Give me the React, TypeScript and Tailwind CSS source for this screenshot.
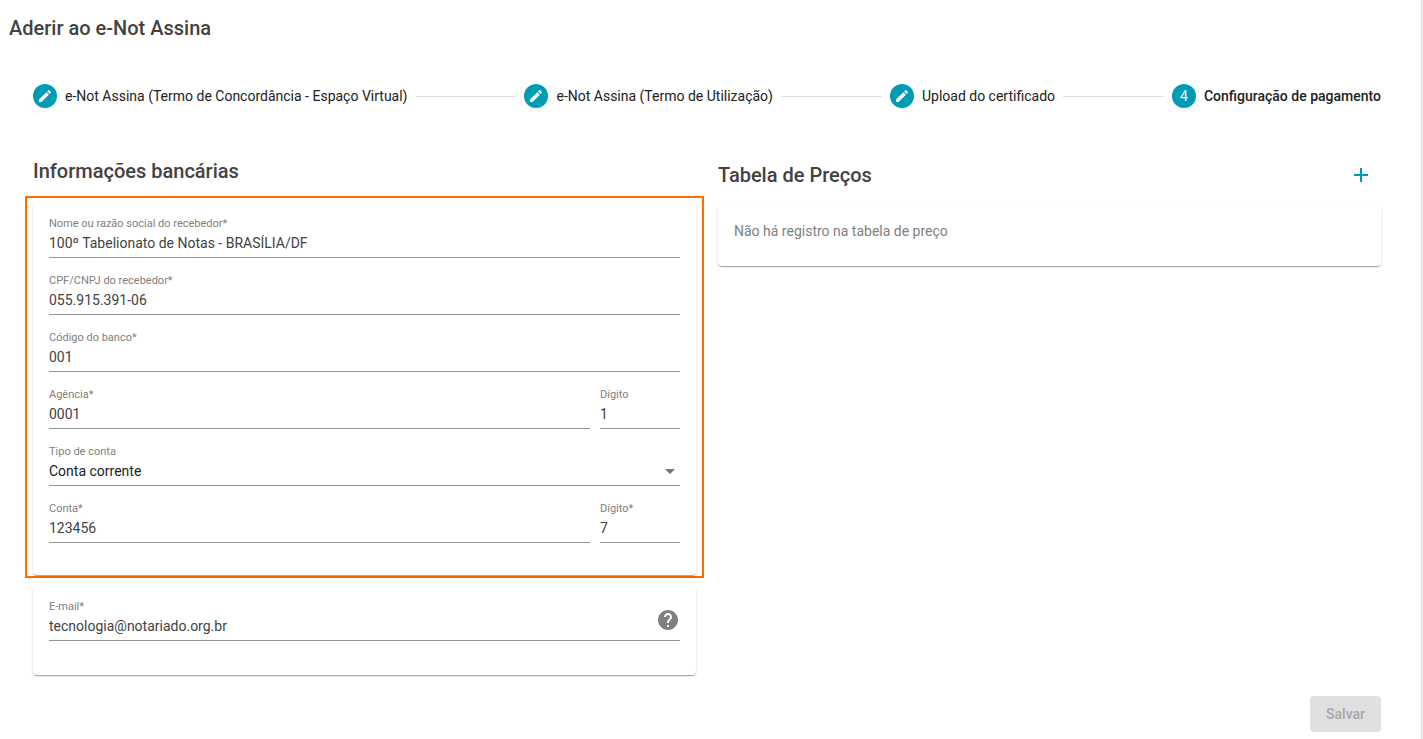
import { Fragment } from "react";
import { MdAdd, MdArrowDropDown, MdCreate, MdHelp } from "react-icons/md";

interface FieldProps {
  id: string;
  label: string;
  value: string;
  type?: string;
  className?: string;
}

const steps = [
  "e-Not Assina (Termo de Concordância - Espaço Virtual)",
  "e-Not Assina (Termo de Utilização)",
  "Upload do certificado",
  "Configuração de pagamento",
];

const cardStyle =
  "rounded bg-white shadow-[0_2px_1px_-1px_rgba(0,0,0,0.2),0_1px_1px_0_rgba(0,0,0,0.14),0_1px_3px_0_rgba(0,0,0,0.12)]";
const labelStyle = "text-[11px] leading-[14px] text-[#808080]";
const controlStyle =
  "h-[27px] w-full rounded-none border-b border-[#949494] bg-transparent p-0 pb-0.5 text-sm outline-none";

const Field = ({ id, label, value, type = "text", className = "" }: FieldProps) => (
  <div className={`flex flex-col ${className}`}>
    <label htmlFor={id} className={labelStyle}>
      {label}
    </label>
    <input id={id} type={type} defaultValue={value} className={`${controlStyle} text-[#424242]`} />
  </div>
);

const Stepper = () => (
  <ol className="flex items-center gap-2 text-sm text-[#212121]">
    {steps.map((step, i) => {
      const current = i === steps.length - 1;
      return (
        <Fragment key={step}>
          <li
            aria-current={current ? "step" : undefined}
            className="flex shrink-0 items-center gap-2"
          >
            <span className="flex size-6 items-center justify-center rounded-full bg-[#009bb4] text-white">
              {current ? i + 1 : <MdCreate className="size-4" />}
            </span>
            <span className={current ? "font-medium" : ""}>{step}</span>
          </li>
          {!current && <li aria-hidden="true" className="h-px flex-1 bg-[#e0e0e0]" />}
        </Fragment>
      );
    })}
  </ol>
);

const BankForm = () => (
  <div className="-mx-2 border-2 border-[#ff6d00] px-1.5 pt-[5px] pb-px">
    <div className={`${cardStyle} flex flex-col gap-4 px-4 pt-3.5 pb-8`}>
      <Field
        id="nome"
        label="Nome ou razão social do recebedor*"
        value="100º Tabelionato de Notas - BRASÍLIA/DF"
      />
      <Field id="cpf" label="CPF/CNPJ do recebedor*" value="055.915.391-06" />
      <Field id="banco" label="Código do banco*" value="001" />
      <div className="flex gap-2.5">
        <Field id="agencia" label="Agência*" value="0001" className="flex-1" />
        <Field id="agencia-digito" label="Dígito" value="1" className="w-20" />
      </div>
      <div className="flex flex-col">
        <label htmlFor="tipo" className={labelStyle}>
          Tipo de conta
        </label>
        <div className="relative">
          <select
            id="tipo"
            defaultValue="corrente"
            className={`${controlStyle} block appearance-none text-[#212121]`}
          >
            <option value="corrente">Conta corrente</option>
            <option value="poupanca">Conta poupança</option>
          </select>
          <MdArrowDropDown className="pointer-events-none absolute top-0 -right-0.5 size-6 text-[#757575]" />
        </div>
      </div>
      <div className="flex gap-2.5">
        <Field id="conta" label="Conta*" value="123456" className="flex-1" />
        <Field id="conta-digito" label="Dígito*" value="7" className="w-20" />
      </div>
    </div>
  </div>
);

export default function App() {
  return (
    <div className="min-h-screen bg-[#eeeeee] pr-px font-[Roboto,sans-serif]">
      <main className="min-h-screen border-r border-[#e0e0e0] bg-white pb-1.5">
        <h1 className="px-[9px] pt-4 text-xl leading-6 font-medium text-[#424242]">
          Aderir ao e-Not Assina
        </h1>

        <div className="pt-11 pr-10 pl-[33px]">
          <Stepper />

          <div className="mt-[51px] grid grid-cols-2 gap-[22px]">
            <section>
              <h2 className="mb-[13px] text-xl leading-6 font-medium text-[#424242]">
                Informações bancárias
              </h2>
              <BankForm />
              <div className={`${cardStyle} relative mt-2 px-4 pt-3.5 pb-[34px]`}>
                <Field
                  id="email"
                  type="email"
                  label="E-mail*"
                  value="tecnologia@notariado.org.br"
                />
                <button
                  type="button"
                  aria-label="Ajuda"
                  className="absolute top-[22px] right-4 text-[#808080]"
                >
                  <MdHelp className="size-6" />
                </button>
              </div>
            </section>

            <section>
              <div className="flex h-[46px] items-start justify-between pt-1">
                <h2 className="text-xl leading-6 font-medium text-[#424242]">Tabela de Preços</h2>
                <button type="button" aria-label="Adicionar preço" className="mr-2 text-[#009bb4]">
                  <MdAdd className="size-6" />
                </button>
              </div>
              <div className={`${cardStyle} px-4 pt-4 pb-[25px] text-sm text-[#808080]`}>
                Não há registro na tabela de preço
              </div>
            </section>
          </div>

          <div className="mt-[21px] flex justify-end">
            <button
              type="button"
              disabled
              className="h-9 rounded bg-[#e0e0e0] px-4 text-sm font-medium text-[#a6a6a6]"
            >
              Salvar
            </button>
          </div>
        </div>
      </main>
    </div>
  );
}
